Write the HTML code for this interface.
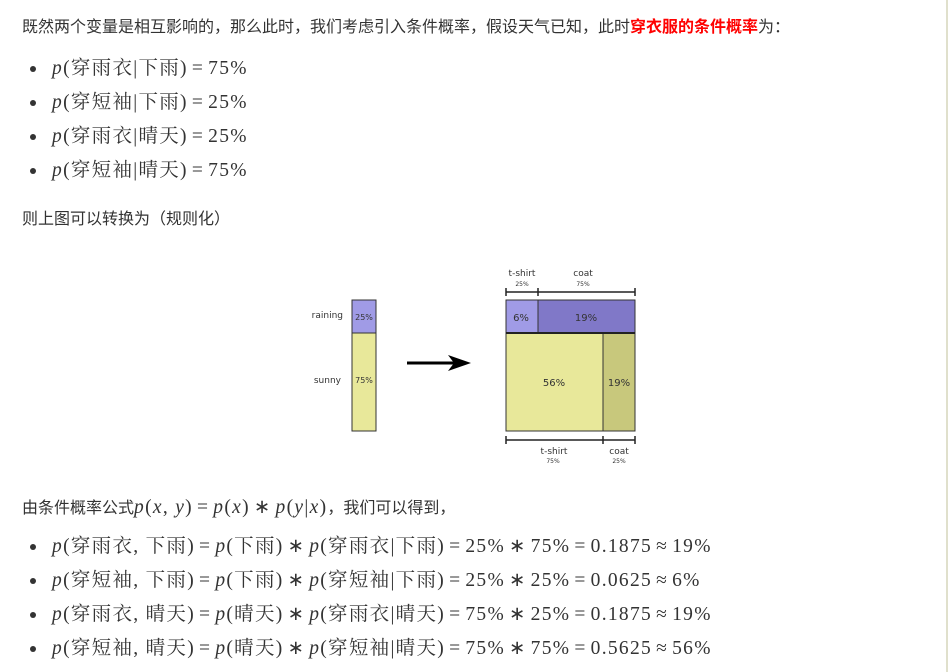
<!DOCTYPE html>
<html><head><meta charset="utf-8"><style>
html,body{margin:0;padding:0;background:#fff;width:948px;height:672px;overflow:hidden;position:relative}
.t{position:absolute;left:22px;font:16px "Liberation Sans","Noto Sans CJK SC",sans-serif;color:#333;white-space:nowrap;line-height:20px}
.m{position:absolute;left:52px;font:19.5px "Liberation Serif","Noto Serif CJK SC",serif;color:#333;white-space:nowrap;line-height:24px;letter-spacing:1.3px}
.m i,.t i{font-style:italic}
.o{margin:0 4px}
.b{position:absolute;left:30px;width:6px;height:6px;border-radius:50%;background:#333}
.red{color:#f00;font-weight:bold}
.strip{position:absolute;left:946px;top:0;width:2px;height:672px;background:#e0e0cc}
</style></head><body>
<div class="strip"></div>
<div class="t" style="top:18px">既然两个变量是相互影响的，那么此时，我们考虑引入条件概率，假设天气已知，此时<span class="red">穿衣服的条件概率</span>为：</div>

<div class="b" style="top:66px"></div><div class="m" style="top:57px"><i>p</i>(穿雨衣|下雨)<span class="o">=</span>75%</div>
<div class="b" style="top:100px"></div><div class="m" style="top:91px"><i>p</i>(穿短袖|下雨)<span class="o">=</span>25%</div>
<div class="b" style="top:134px"></div><div class="m" style="top:125px"><i>p</i>(穿雨衣|晴天)<span class="o">=</span>25%</div>
<div class="b" style="top:168px"></div><div class="m" style="top:159px"><i>p</i>(穿短袖|晴天)<span class="o">=</span>75%</div>

<div class="t" style="top:210px">则上图可以转换为（规则化）</div>

<svg style="position:absolute;left:0;top:0" width="948" height="672" font-family="DejaVu Sans, Liberation Sans, sans-serif" fill="#333">
<text x="343" y="318" font-size="9" text-anchor="end">raining</text>
<text x="341" y="383" font-size="9" text-anchor="end">sunny</text>
<rect x="352" y="300" width="24" height="33" fill="#a09be6" stroke="#333"/>
<rect x="352" y="333" width="24" height="98" fill="#e8e89a" stroke="#333"/>
<text x="364" y="320" font-size="8" text-anchor="middle">25%</text>
<text x="364" y="383" font-size="8" text-anchor="middle">75%</text>
<line x1="407" y1="363" x2="455" y2="363" stroke="#000" stroke-width="3"/>
<path d="M448 355 L471 363 L448 371 L454 363 Z" fill="#000"/>
<text x="522" y="276" font-size="9" text-anchor="middle">t-shirt</text>
<text x="522" y="286" font-size="6" text-anchor="middle">25%</text>
<text x="583" y="276" font-size="9" text-anchor="middle">coat</text>
<text x="583" y="286" font-size="6" text-anchor="middle">75%</text>
<g stroke="#222" stroke-width="1.5">
<line x1="506" y1="292" x2="635" y2="292"/><line x1="506" y1="288" x2="506" y2="296"/><line x1="538" y1="288" x2="538" y2="296"/><line x1="635" y1="288" x2="635" y2="296"/>
<line x1="506" y1="440" x2="635" y2="440"/><line x1="506" y1="436" x2="506" y2="444"/><line x1="603" y1="436" x2="603" y2="444"/><line x1="635" y1="436" x2="635" y2="444"/>
</g>
<rect x="506" y="300" width="32" height="33" fill="#a09be6" stroke="#333"/>
<rect x="538" y="300" width="97" height="33" fill="#8078c8" stroke="#333"/>
<rect x="506" y="333" width="97" height="98" fill="#e8e89a" stroke="#333"/>
<rect x="603" y="333" width="32" height="98" fill="#c8c87c" stroke="#333"/>
<line x1="506" y1="333" x2="635" y2="333" stroke="#222" stroke-width="2"/>
<text x="521" y="321" font-size="10" text-anchor="middle">6%</text>
<text x="586" y="321" font-size="10" text-anchor="middle">19%</text>
<text x="554" y="386" font-size="10" text-anchor="middle">56%</text>
<text x="619" y="386" font-size="10" text-anchor="middle">19%</text>
<text x="554" y="454" font-size="9" text-anchor="middle">t-shirt</text>
<text x="553" y="463" font-size="6" text-anchor="middle">75%</text>
<text x="619" y="454" font-size="9" text-anchor="middle">coat</text>
<text x="619" y="463" font-size="6" text-anchor="middle">25%</text>
</svg>

<div class="t" style="top:495px">由条件概率公式<span style="font:19.5px 'Liberation Serif',serif;letter-spacing:1.3px"><i>p</i>(<i>x</i>, <i>y</i>)<span class="o">=</span><i>p</i>(<i>x</i>)<span class="o">∗</span><i>p</i>(<i>y</i>|<i>x</i>)</span>，我们可以得到，</div>

<div class="b" style="top:544px"></div><div class="m" style="top:535px"><i>p</i>(穿雨衣, 下雨)<span class="o">=</span><i>p</i>(下雨)<span class="o">∗</span><i>p</i>(穿雨衣|下雨)<span class="o">=</span>25%<span class="o">∗</span>75%<span class="o">=</span>0.1875<span class="o">≈</span>19%</div>
<div class="b" style="top:578px"></div><div class="m" style="top:569px"><i>p</i>(穿短袖, 下雨)<span class="o">=</span><i>p</i>(下雨)<span class="o">∗</span><i>p</i>(穿短袖|下雨)<span class="o">=</span>25%<span class="o">∗</span>25%<span class="o">=</span>0.0625<span class="o">≈</span>6%</div>
<div class="b" style="top:612px"></div><div class="m" style="top:603px"><i>p</i>(穿雨衣, 晴天)<span class="o">=</span><i>p</i>(晴天)<span class="o">∗</span><i>p</i>(穿雨衣|晴天)<span class="o">=</span>75%<span class="o">∗</span>25%<span class="o">=</span>0.1875<span class="o">≈</span>19%</div>
<div class="b" style="top:646px"></div><div class="m" style="top:637px"><i>p</i>(穿短袖, 晴天)<span class="o">=</span><i>p</i>(晴天)<span class="o">∗</span><i>p</i>(穿短袖|晴天)<span class="o">=</span>75%<span class="o">∗</span>75%<span class="o">=</span>0.5625<span class="o">≈</span>56%</div>
</body></html>
